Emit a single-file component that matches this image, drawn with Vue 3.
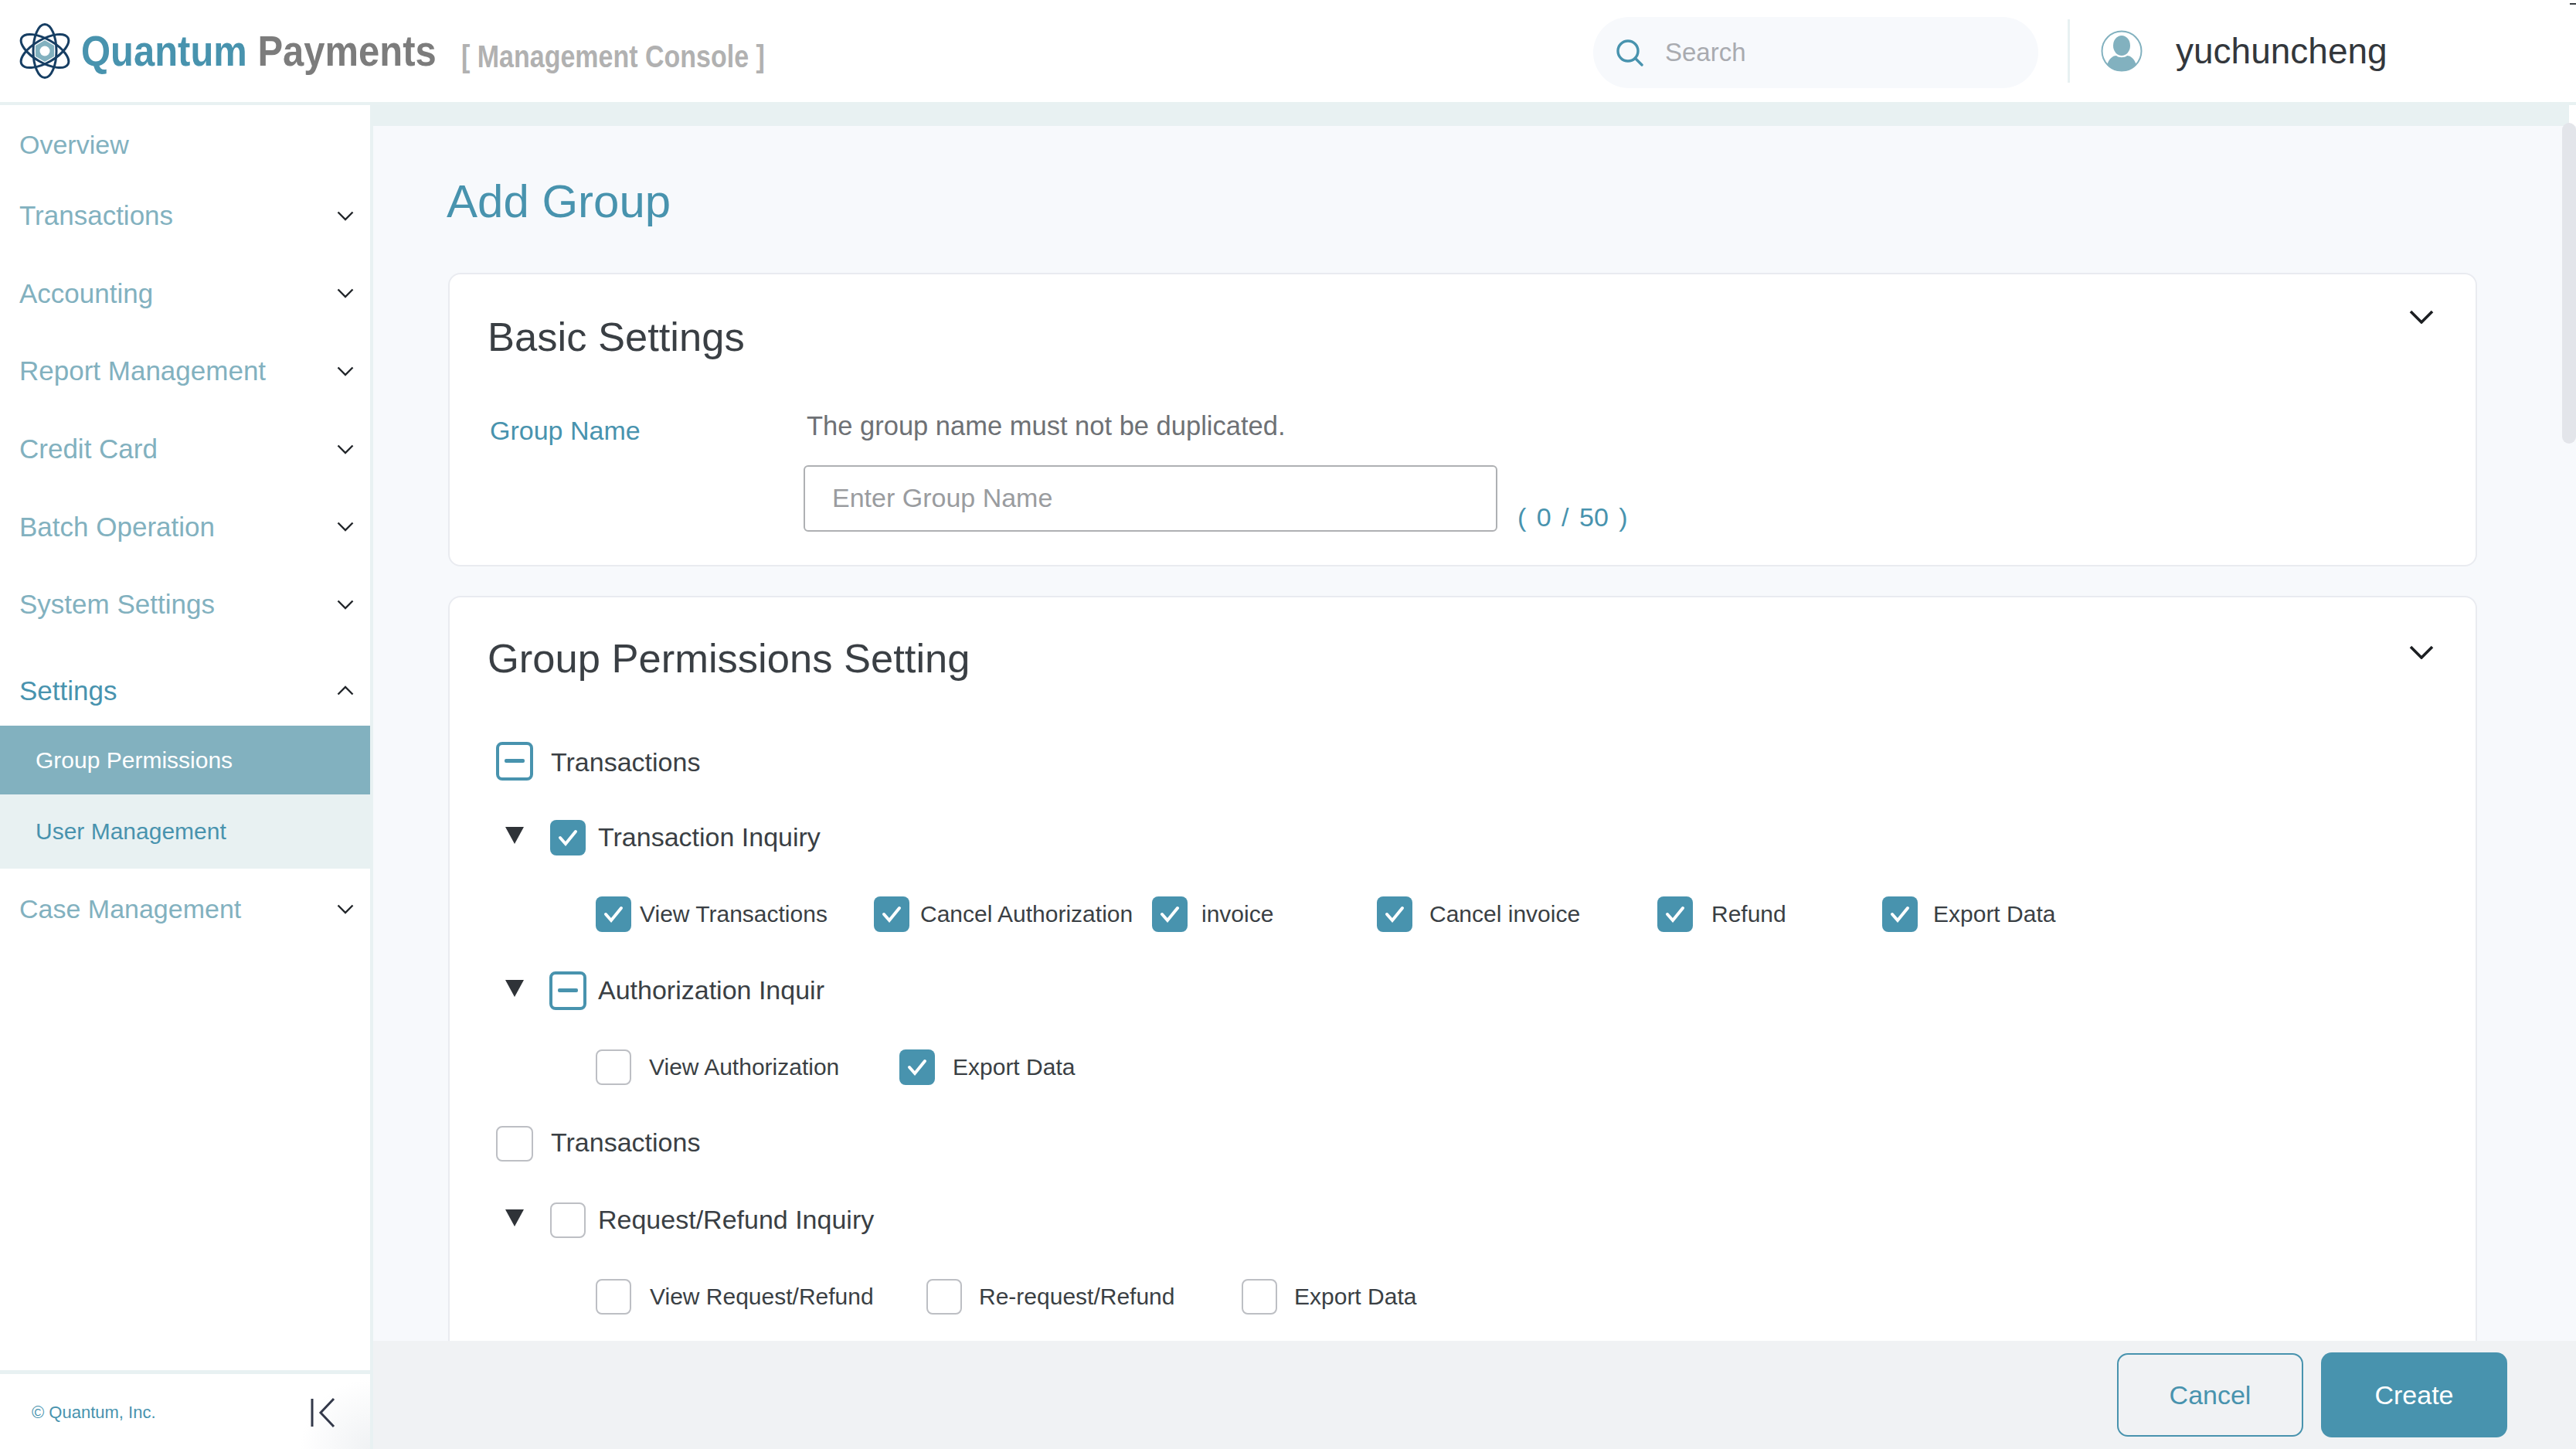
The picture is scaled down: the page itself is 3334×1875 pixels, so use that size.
<script setup>
// sidebar entries, height differs a bit for the settings group
const navTop = [
  "Transactions",
  "Accounting",
  "Report Management",
  "Credit Card",
  "Batch Operation",
  "System Settings",
];

// w = column width, gap = space between box and label
const inquiryLeaves = [
  { label: "View Transactions", on: true, w: 360, gap: 11 },
  { label: "Cancel Authorization", on: true, w: 360, gap: 14 },
  { label: "invoice", on: true, w: 291, gap: 18 },
  { label: "Cancel invoice", on: true, w: 363, gap: 22 },
  { label: "Refund", on: true, w: 291, gap: 24 },
  { label: "Export Data", on: true, w: 0, gap: 20 },
];
const authLeaves = [
  { label: "View Authorization", on: false, w: 393, gap: 23 },
  { label: "Export Data", on: true, w: 0, gap: 23 },
];
const refundLeaves = [
  { label: "View Request/Refund", on: false, w: 428, gap: 24 },
  { label: "Re-request/Refund", on: false, w: 408, gap: 22 },
  { label: "Export Data", on: false, w: 0, gap: 22 },
];

const tree = [
  { root: "Transactions", rootState: "minus", title: "Transaction Inquiry", titleState: "on", leaves: inquiryLeaves },
  { title: "Authorization Inquir", titleState: "minus", leaves: authLeaves },
  { root: "Transactions", rootState: "off", title: "Request/Refund Inquiry", titleState: "off", leaves: refundLeaves },
];
</script>

<template>
  <div class="app">
    <header class="topbar">
      <svg class="logo" viewBox="0 0 66 72" width="66" height="72">
        <g fill="none" stroke="#163e63" stroke-width="3">
          <ellipse cx="33" cy="36" rx="15" ry="34.5" />
          <ellipse cx="33" cy="36" rx="15" ry="34.5" transform="rotate(60 33 36)" />
          <ellipse cx="33" cy="36" rx="15" ry="34.5" transform="rotate(120 33 36)" />
        </g>
        <polygon points="33,22 45,29 45,43 33,50 21,43 21,29" fill="#82b1bf" />
        <circle cx="33" cy="36" r="6.5" fill="#fff" />
      </svg>
      <div class="brand"><span class="brand-a">Quantum</span> <span class="brand-b">Payments</span></div>
      <div class="console">[ Management Console ]</div>

      <div class="search">
        <svg viewBox="0 0 36 36" width="36" height="36" fill="none" stroke="#4893ae" stroke-width="3.4">
          <circle cx="16" cy="16" r="13" />
          <path d="M25.5 25.5 34 34" stroke-linecap="round" />
        </svg>
        <span>Search</span>
      </div>
      <div class="user">
        <svg viewBox="0 0 54 54" width="54" height="54">
          <circle cx="27" cy="27" r="25.5" fill="none" stroke="#82b1bf" stroke-width="2" />
          <ellipse cx="27" cy="20" rx="11" ry="13" fill="#82b1bf" />
          <path d="M8 45c3-9 8-12 12-12 3 3 11 3 14 0 4 0 9 3 12 12-5 6-12 8-19 8s-14-2-19-8z" fill="#82b1bf" />
        </svg>
        <span class="user-name">yuchuncheng</span>
      </div>
      <span class="corner-dash"></span>
    </header>

    <div class="body">
      <aside class="sidebar">
        <nav class="nav">
          <div class="nav-item nav-first">Overview</div>
          <div v-for="item in navTop" :key="item" class="nav-item">
            <span>{{ item }}</span>
            <svg class="chev" viewBox="0 0 22 13" width="22" height="13"><path d="M1.5 1.5 11 11l9.5-9.5" /></svg>
          </div>
          <div class="nav-item nav-open">
            <span>Settings</span>
            <svg class="chev" viewBox="0 0 22 13" width="22" height="13"><path d="M1.5 11.5 11 2l9.5 9.5" /></svg>
          </div>
          <div class="sub sub-active">Group Permissions</div>
          <div class="sub">User Management</div>
          <div class="nav-item nav-last">
            <span>Case Management</span>
            <svg class="chev" viewBox="0 0 22 13" width="22" height="13"><path d="M1.5 1.5 11 11l9.5-9.5" /></svg>
          </div>
        </nav>
        <div class="side-foot">
          <span>© Quantum, Inc.</span>
          <svg viewBox="0 0 32 40" width="32" height="40" fill="none" stroke="#33394a" stroke-width="3">
            <path d="M2 2v36" />
            <path d="M30 2 13 20l17 18" />
          </svg>
        </div>
      </aside>

      <main class="main">
        <div class="strip"></div>
        <div class="content">
          <h1 class="page-title">Add Group</h1>

          <section class="card card-basic">
            <div class="card-head">
              <h2>Basic Settings</h2>
              <svg class="card-chev" viewBox="0 0 32 18" width="32" height="18"><path d="M2 2l14 14L30 2" /></svg>
            </div>
            <div class="field">
              <label>Group Name</label>
              <div class="field-body">
                <p class="hint">The group name must not be duplicated.</p>
                <div class="field-line">
                  <div class="input">Enter Group Name</div>
                  <span class="counter">( 0 / 50 )</span>
                </div>
              </div>
            </div>
          </section>

          <section class="card card-perm">
            <div class="card-head">
              <h2>Group Permissions Setting</h2>
              <svg class="card-chev" viewBox="0 0 32 18" width="32" height="18"><path d="M2 2l14 14L30 2" /></svg>
            </div>
            <div class="tree">
              <template v-for="(group, i) in tree" :key="i">
                <div v-if="group.root" class="row row-root">
                  <span class="box box-root" :class="group.rootState"><i v-if="group.rootState === 'minus'"></i></span>
                  <span class="row-text">{{ group.root }}</span>
                </div>
                <div class="row row-title">
                  <span class="tri"></span>
                  <span class="box" :class="group.titleState">
                    <i v-if="group.titleState === 'minus'"></i>
                    <svg v-if="group.titleState === 'on'" viewBox="0 0 46 46"><path d="M13 23l7 8 13-16" /></svg>
                  </span>
                  <span class="row-text">{{ group.title }}</span>
                </div>
                <div class="row row-leaves">
                  <div
                    v-for="leaf in group.leaves"
                    :key="leaf.label"
                    class="leaf"
                    :style="{ width: leaf.w ? leaf.w + 'px' : 'auto', gap: leaf.gap + 'px' }"
                  >
                    <span class="box" :class="leaf.on ? 'on' : 'off'">
                      <svg v-if="leaf.on" viewBox="0 0 46 46"><path d="M13 23l7 8 13-16" /></svg>
                    </span>
                    <span>{{ leaf.label }}</span>
                  </div>
                </div>
              </template>
            </div>
          </section>
        </div>
        <div class="scroll-thumb"></div>
        <footer class="actions">
          <button class="btn btn-ghost">Cancel</button>
          <button class="btn btn-solid">Create</button>
        </footer>
      </main>
    </div>
  </div>
</template>

<style scoped>
.app {
  height: 100vh;
  display: flex;
  flex-direction: column;
  overflow: hidden;
  font-family: "Liberation Sans", Arial, sans-serif;
  color: #3a3f44;
  background: #fff;
}

/* top bar */
.topbar {
  position: relative;
  height: 132px;
  flex: none;
  display: flex;
  align-items: center;
  padding-left: 25px;
  border-bottom: 4px solid #e8f1f2;
  box-sizing: content-box;
}
.corner-dash {
  position: absolute;
  top: 4px;
  right: 0;
  width: 8px;
  height: 2px;
  background: #3a3f44;
}
.logo {
  flex: none;
  margin-right: 14px;
}
.brand {
  width: 459px;
  flex: none;
  font-size: 55px;
  font-weight: 700;
  white-space: nowrap;
  transform: scaleX(0.89);
  transform-origin: left center;
}
.brand-a {
  color: #4893ae;
}
.brand-b {
  color: #7c7c7c;
}
.console {
  width: 392px;
  flex: none;
  margin: 14px 0 0 33px;
  font-size: 40px;
  font-weight: 700;
  color: #b1b1b1;
  white-space: nowrap;
  transform: scaleX(0.85);
  transform-origin: left center;
}
.search {
  width: 576px;
  height: 92px;
  flex: none;
  margin: 4px 0 0 auto;
  display: flex;
  align-items: center;
  gap: 28px;
  padding-left: 29px;
  box-sizing: border-box;
  border-radius: 46px;
  background: #f7f9fc;
  font-size: 33px;
  color: #a9abb0;
}
.user {
  width: 658px;
  height: 82px;
  flex: none;
  margin-left: 38px;
  display: flex;
  align-items: center;
  gap: 43px;
  padding-left: 40px;
  box-sizing: border-box;
  border-left: 3px solid #e8f1f2;
}
.user-name {
  font-size: 46px;
  color: #33373c;
}

.body {
  flex: 1;
  min-height: 0;
  display: flex;
}

/* sidebar */
.sidebar {
  width: 479px;
  flex: none;
  display: flex;
  flex-direction: column;
  border-right: 4px solid #e8f1f2;
  box-sizing: content-box;
}
.nav {
  flex: 1;
}
.nav-item {
  height: 100.6px;
  display: flex;
  align-items: center;
  justify-content: space-between;
  padding: 0 21px 0 25px;
  box-sizing: border-box;
  font-size: 35px;
  color: #82b1bf;
}
.nav-first {
  height: 93px;
  padding-top: 10px;
  font-size: 34px;
}
.nav-open {
  height: 106px;
  padding-top: 16px;
  color: #4893ae;
}
.nav-last {
  height: 106px;
  font-size: 34px;
}
.chev {
  fill: none;
  stroke: #22262a;
  stroke-width: 2.4;
}
.sub {
  height: 96px;
  display: flex;
  align-items: center;
  padding-left: 46px;
  font-size: 30px;
  background: #e8f1f2;
  color: #4893ae;
}
.sub-active {
  height: 89px;
  padding-top: 2px;
  box-sizing: border-box;
  background: #82b1bf;
  color: #fff;
}
.side-foot {
  height: 102px;
  flex: none;
  display: flex;
  align-items: center;
  justify-content: space-between;
  padding: 3px 45px 0 41px;
  box-sizing: border-box;
  border-top: 5px solid #e8f1f2;
  font-size: 22px;
  color: #4893ae;
  background: radial-gradient(circle at 100% 100%, #f0f2f4, #fff 90px);
}

/* main column */
.main {
  position: relative;
  flex: 1;
  min-width: 0;
  display: flex;
  flex-direction: column;
}
.strip {
  height: 27px;
  flex: none;
  margin-right: 9px;
  background: #e8f1f2;
}
.content {
  flex: 1;
  min-height: 0;
  overflow: hidden;
  padding: 63px 128px 0 97px;
  background: #f7f9fc;
}
.page-title {
  margin: 0 0 57px -2px;
  font-size: 60px;
  line-height: 70px;
  font-weight: 400;
  color: #4893ae;
}
.card {
  padding: 40px 54px 43px 45px;
  border: 2px solid #e9ebf0;
  border-radius: 16px;
  background: #fff;
}
.card-perm {
  margin-top: 38px;
  padding-bottom: 120px;
}
.card-head {
  display: flex;
  justify-content: space-between;
  align-items: flex-start;
}
.card-head h2 {
  margin: 11px 0 0 4px;
  font-size: 52.5px;
  line-height: 60px;
  font-weight: 400;
  color: #3a3f44;
}
.card-perm .card-head h2 {
  margin-top: 9px;
}
.card-chev {
  margin-top: 6px;
  fill: none;
  stroke: #1c1f22;
  stroke-width: 3.6;
}
.card-perm .card-chev {
  margin-top: 22px;
}

/* group name field */
.field {
  display: flex;
  margin-top: 65px;
}
.field label {
  width: 406px;
  flex: none;
  margin: 6px 0 0 7px;
  font-size: 34px;
  line-height: 40px;
  color: #4893ae;
}
.hint {
  margin: 0 0 31px 4px;
  font-size: 34.5px;
  line-height: 40px;
  color: #6e7175;
}
.field-line {
  display: flex;
  align-items: flex-end;
  gap: 26px;
}
.input {
  width: 898px;
  height: 86px;
  display: flex;
  align-items: center;
  padding: 0 0 2px 35px;
  box-sizing: border-box;
  border: 2px solid #aeb0b3;
  border-radius: 6px;
  font-size: 34px;
  color: #9a9c9f;
}
.counter {
  margin-bottom: -1px;
  font-size: 34px;
  line-height: 40px;
  word-spacing: 4px;
  color: #4893ae;
}

/* permission tree */
.tree {
  margin-top: 53px;
  padding-left: 15px;
}
.row {
  height: 99px;
  display: flex;
  align-items: center;
}
.row-text {
  font-size: 34px;
}
.row-root .box.minus + .row-text {
  margin-top: 3px;
}
.row-root .box.off + .row-text {
  margin-top: -3px;
}
.box {
  width: 46px;
  height: 46px;
  flex: none;
  display: flex;
  align-items: center;
  justify-content: center;
  box-sizing: border-box;
  border-radius: 8px;
}
.box svg {
  width: 46px;
  height: 46px;
  fill: none;
  stroke: #fff;
  stroke-width: 4;
  stroke-linecap: round;
}
.box.on {
  background: #4893ae;
}
.box.off {
  border: 2px solid #bdbfc4;
  background: #fff;
}
.box.minus {
  width: 48px;
  height: 50px;
  margin: 0 -1px;
  border: 4px solid #4893ae;
  background: #fff;
}
.box.minus i {
  width: 26px;
  height: 5px;
  border-radius: 2px;
  background: #4893ae;
}
.box-root {
  margin-right: 23px !important;
}
.box-root.minus {
  margin: 0 23px 0 0;
}
.box-root.off {
  width: 48px;
  height: 46px;
}
.row-title .box {
  margin-right: 16px;
}
.row-title .box.minus {
  margin-right: 15px;
}
.tri {
  width: 0;
  height: 0;
  flex: none;
  margin: -6px 34px 0 12px;
  border-left: 12.5px solid transparent;
  border-right: 12.5px solid transparent;
  border-top: 22px solid #2f3338;
}
.row-leaves {
  padding-left: 129px;
  font-size: 30px;
  color: #3a3f44;
}
.leaf {
  flex: none;
  display: flex;
  align-items: center;
  white-space: nowrap;
}

.scroll-thumb {
  position: absolute;
  top: 23px;
  right: 0;
  width: 18px;
  height: 415px;
  border-radius: 9px;
  background: #e3e5ea;
}

/* bottom buttons */
.actions {
  height: 140px;
  flex: none;
  display: flex;
  align-items: center;
  justify-content: flex-end;
  gap: 23px;
  padding-right: 89px;
  background: #f0f2f4;
}
.btn {
  width: 241px;
  height: 110px;
  border-radius: 14px;
  font-family: inherit;
  font-size: 34px;
}
.btn-ghost {
  height: 108px;
  border: 2px solid #4893ae;
  background: transparent;
  color: #4893ae;
}
.btn-solid {
  border: none;
  background: #4893ae;
  color: #fff;
}
</style>
